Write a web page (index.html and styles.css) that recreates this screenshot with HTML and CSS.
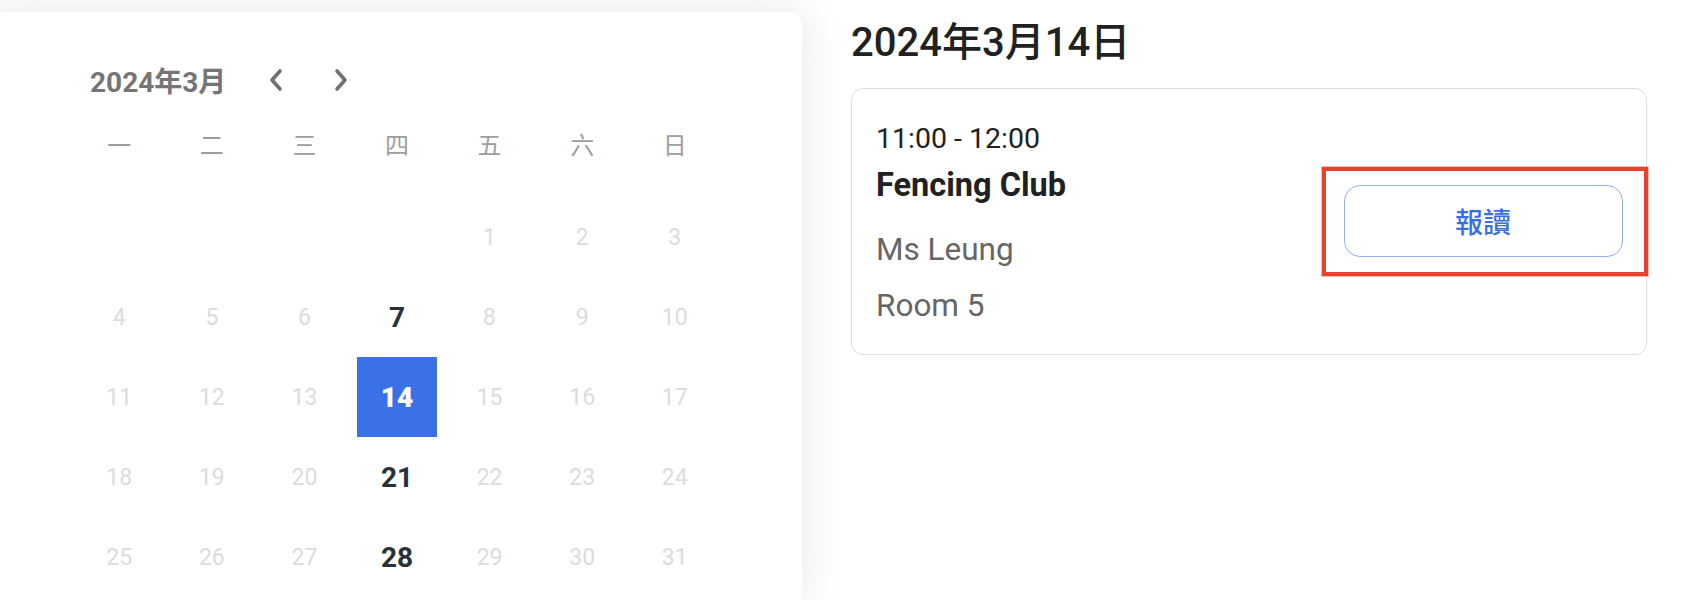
FILE: index.html
```html
<!DOCTYPE html>
<html>
<head>
    <meta charset="UTF-8">
    <title>課程報讀</title>
    <link rel="stylesheet" href="styles.css">
</head>
<body>
    <div class="page">
        <div class="calendar">
            <div class="month-bar">
                <span class="month-title">2024年3月</span>
                <button class="nav-btn prev" aria-label="上個月">
                    <svg width="16" height="24" viewBox="0 0 16 24"><polyline points="12,3 4,12 12,21" fill="none" stroke="#707070" stroke-width="3.6" stroke-linecap="round" stroke-linejoin="round"/></svg>
                </button>
                <button class="nav-btn next" aria-label="下個月">
                    <svg width="16" height="24" viewBox="0 0 16 24"><polyline points="4,3 12,12 4,21" fill="none" stroke="#707070" stroke-width="3.6" stroke-linecap="round" stroke-linejoin="round"/></svg>
                </button>
            </div>
            <div class="weekdays">
                <span>一</span><span>二</span><span>三</span><span>四</span><span>五</span><span>六</span><span>日</span>
            </div>
            <div class="days">
                <span></span><span></span><span></span><span></span>
                <span class="day">1</span><span class="day">2</span><span class="day">3</span>
                <span class="day">4</span><span class="day">5</span><span class="day">6</span>
                <span class="day active">7</span>
                <span class="day">8</span><span class="day">9</span><span class="day">10</span>
                <span class="day">11</span><span class="day">12</span><span class="day">13</span>
                <span class="day active selected"><b>14</b></span>
                <span class="day">15</span><span class="day">16</span><span class="day">17</span>
                <span class="day">18</span><span class="day">19</span><span class="day">20</span>
                <span class="day active">21</span>
                <span class="day">22</span><span class="day">23</span><span class="day">24</span>
                <span class="day">25</span><span class="day">26</span><span class="day">27</span>
                <span class="day active">28</span>
                <span class="day">29</span><span class="day">30</span><span class="day">31</span>
            </div>
        </div>

        <div class="schedule">
            <h2 class="date-title">2024年3月14日</h2>
            <div class="lesson">
                <div class="lesson-info">
                    <p class="lesson-time">11:00 - 12:00</p>
                    <p class="lesson-name">Fencing Club</p>
                    <p class="lesson-teacher">Ms Leung</p>
                    <p class="lesson-room">Room 5</p>
                </div>
                <div class="highlight">
                    <button class="enrol-btn">報讀</button>
                </div>
            </div>
        </div>
    </div>
</body>
</html>
```

FILE: styles.css
```css
body {
    margin: 0;
    height: 600px;
    overflow: hidden;
    background-color: #fff;
    font-family: Roboto, "Noto Sans CJK TC", sans-serif;
}
.page {
    display: flex;
    align-items: flex-start;
}
.calendar {
    flex: none;
    box-sizing: border-box;
    width: 810px;
    height: 588px;
    margin-top: 12px;
    margin-left: -8px;
    padding: 48px 81px 0 81px;
    background-color: #fff;
    border-radius: 12px 12px 0 0;
    box-shadow: 0 0 45px rgba(0, 0, 0, 0.1);
}
.month-bar {
    display: flex;
    align-items: center;
    height: 40px;
    padding-left: 17px;
}
.month-title {
    font-size: 28px;
    font-weight: 700;
    color: #757575;
}
.nav-btn {
    display: flex;
    padding: 0;
    border: none;
    background: none;
}
.prev {
    margin-left: 42px;
}
.next {
    margin-left: 49px;
}
.weekdays {
    display: grid;
    grid-template-columns: repeat(7, 1fr);
    height: 60px;
    margin-top: 16px;
    line-height: 60px;
    text-align: center;
    font-size: 24px;
    color: #9e9e9e;
}
.days {
    display: grid;
    grid-template-columns: repeat(7, 1fr);
    grid-auto-rows: 80px;
    margin-top: 21px;
}
.day {
    display: flex;
    align-items: center;
    justify-content: center;
    font-size: 23px;
    color: #dcdcdc;
}
.day.active {
    font-size: 28px;
    font-weight: 700;
    color: #263238;
}
.day.selected b {
    display: flex;
    align-items: center;
    justify-content: center;
    width: 80px;
    height: 80px;
    background-color: #3a71e6;
    color: #fff;
}
.schedule {
    flex: none;
    width: 796px;
    margin-left: 49px;
    padding-top: 19px;
}
.date-title {
    margin: 0;
    line-height: 48px;
    font-size: 40px;
    font-weight: 500;
    color: #212121;
}
.lesson {
    display: flex;
    align-items: flex-start;
    box-sizing: border-box;
    height: 267px;
    margin-top: 21px;
    padding-top: 30px;
    padding-left: 24px;
    border: 1.5px solid #dedede;
    border-radius: 12px;
}
.lesson-info {
    flex: 1;
}
.lesson-info p {
    margin: 0;
    line-height: 40px;
}
.lesson-time {
    font-size: 28.5px;
    color: #212121;
}
.lesson-name {
    margin-top: 6px !important;
    font-size: 32.5px;
    font-weight: 700;
    color: #212121;
}
.lesson-teacher {
    margin-top: 25px !important;
    font-size: 31.5px;
    color: #666;
}
.lesson-room {
    margin-top: 16px !important;
    font-size: 31.5px;
    color: #666;
}
.highlight {
    margin-top: 48px;
    margin-right: -1.5px;
    padding: 14px 21px 15px 18px;
    border: 4px solid #e8412c;
    box-shadow: 0 0 0 1px rgba(232, 65, 44, 0.35);
}
.enrol-btn {
    display: block;
    width: 279px;
    height: 72px;
    border: 1.5px solid #8fb1f2;
    border-radius: 16px;
    background-color: #fff;
    font-family: Roboto, "Noto Sans CJK TC", sans-serif;
    font-size: 28px;
    font-weight: 500;
    color: #3a6fe4;
}
```
